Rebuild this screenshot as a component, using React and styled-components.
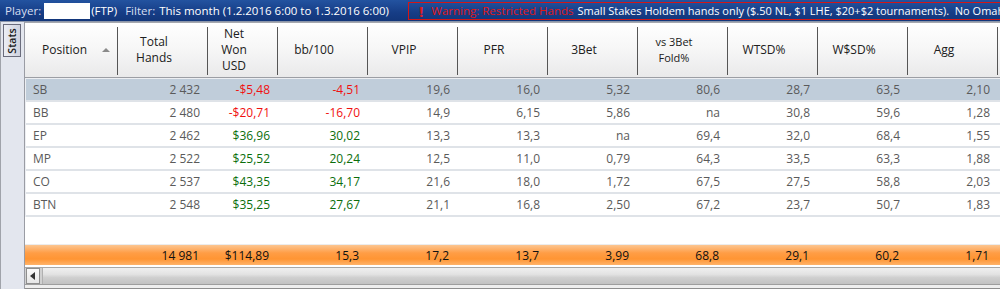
import styled, { createGlobalStyle } from 'styled-components';

const GlobalStyle = createGlobalStyle`
html, body {
    margin: 0;
    padding: 0;
    background: #ffffff;
    overflow: hidden;
}
body {
    font-family: "Open Sans", "Noto Sans", sans-serif;
}
`

const columns = [
    { key: 'pos', label: ['Position'], width: 92, left: true },
    { key: 'hands', label: ['Total', 'Hands'], width: 90 },
    { key: 'won', label: ['Net', 'Won', 'USD'], width: 70 },
    { key: 'bb', label: ['bb/100'], width: 90 },
    { key: 'vpip', label: ['VPIP'], width: 90 },
    { key: 'pfr', label: ['PFR'], width: 90 },
    { key: 'threeBet', label: ['3Bet'], width: 90 },
    { key: 'fold', label: ['vs 3Bet', 'Fold%'], width: 90, small: true },
    { key: 'wtsd', label: ['WTSD%'], width: 90 },
    { key: 'wssd', label: ['W$SD%'], width: 90 },
    { key: 'agg', label: ['Agg'], width: 90 },
];

const rows = [
    ['SB', '2 432', '-$5,48', '-4,51', '19,6', '16,0', '5,32', '80,6', '28,7', '63,5', '2,10'],
    ['BB', '2 480', '-$20,71', '-16,70', '14,9', '6,15', '5,86', 'na', '30,8', '59,6', '1,28'],
    ['EP', '2 462', '$36,96', '30,02', '13,3', '13,3', 'na', '69,4', '32,0', '68,4', '1,55'],
    ['MP', '2 522', '$25,52', '20,24', '12,5', '11,0', '0,79', '64,3', '33,5', '63,3', '1,88'],
    ['CO', '2 537', '$43,35', '34,17', '21,6', '18,0', '1,72', '67,5', '27,5', '58,8', '2,03'],
    ['BTN', '2 548', '$35,25', '27,67', '21,1', '16,8', '2,50', '67,2', '23,7', '50,7', '1,83'],
];

const totals = ['', '14 981', '$114,89', '15,3', '17,2', '13,7', '3,99', '68,8', '29,1', '60,2', '1,71'];

function toneOf(value, index) {
    if (index !== 2 && index !== 3) return 'plain';
    return value.startsWith('-') ? 'loss' : 'win';
}

function App() {
    return (
        <>
            <GlobalStyle />
            <Page>
                <TopBar>
                    <FilterGroup>
                        <Dim>Player:</Dim>
                        <PlayerBox />
                        <span>(FTP)</span>
                        <Dim style={{ marginLeft: 8 }}>Filter:</Dim>
                        <Strong>This month (1.2.2016 6:00 to 1.3.2016 6:00)</Strong>
                    </FilterGroup>
                    <Warning>
                        <Bang>!</Bang>
                        <WarnLabel>Warning: Restricted Hands</WarnLabel>
                        <Strong>Small Stakes Holdem hands only ($.50 NL, $1 LHE, $20+$2 tournaments).&nbsp; No Omaha hands</Strong>
                    </Warning>
                </TopBar>

                <Body>
                    <SideStrip>
                        <StatsTab><span>Stats</span></StatsTab>
                    </SideStrip>

                    <Grid>
                        <HeaderRow>
                            {columns.map(col => (
                                <HeaderCell key={col.key} $width={col.width} $left={col.left} $small={col.small}>
                                    <div>
                                        {col.label.map(line => <div key={line}>{line}</div>)}
                                    </div>
                                    {col.left && <SortArrow />}
                                </HeaderCell>
                            ))}
                        </HeaderRow>

                        <Rows>
                            {rows.map((row, i) => (
                                <Row key={row[0]} $selected={i === 0}>
                                    {row.map((value, j) => (
                                        <Cell key={j} $width={columns[j].width} $left={j === 0} $tone={toneOf(value, j)}>
                                            {value}
                                        </Cell>
                                    ))}
                                </Row>
                            ))}
                        </Rows>

                        <Filler />

                        <TotalsRow>
                            {totals.map((value, j) => (
                                <TotalCell key={j} $width={columns[j].width}>{value}</TotalCell>
                            ))}
                        </TotalsRow>

                        <ScrollBar>
                            <ScrollButton>
                                <svg width="6" height="8" viewBox="0 0 6 8">
                                    <path d="M5 0 L5 8 L0 4 Z" fill="#333" />
                                </svg>
                            </ScrollButton>
                            <ScrollTrack />
                        </ScrollBar>
                        <BottomEdge />
                    </Grid>
                </Body>
            </Page>
        </>
    )
}

const Page = styled.div`
width: 1000px;
height: 289px;
display: flex;
flex-direction: column;
overflow: hidden;
`
const TopBar = styled.div`
height: 21px;
flex-shrink: 0;
display: flex;
align-items: center;
background: linear-gradient(#2353a0, #163d86 60%, #12367a);
color: #ffffff;
font-size: 11px;
white-space: nowrap;
overflow: hidden;
border-bottom: 1px solid #8c96aa;
`
const FilterGroup = styled.div`
width: 408px;
flex-shrink: 0;
display: flex;
align-items: center;
padding-left: 5px;
box-sizing: border-box;
font-size: 11.5px;
`
const Dim = styled.span`
color: #d6def0;
`
const Strong = styled.span`
color: #ffffff;
margin-left: 4px;
`
const PlayerBox = styled.span`
display: inline-block;
width: 46px;
height: 16px;
background: #ffffff;
margin: 0 1px 0 3px;
`
const Warning = styled.div`
flex-shrink: 0;
height: 16px;
display: flex;
align-items: center;
border: 1px solid #d41616;
padding-left: 10px;
`
const Bang = styled.span`
color: #e41c1c;
font-weight: 700;
font-size: 15px;
margin-right: 8px;
`
const WarnLabel = styled.span`
color: #e01818;
font-size: 11.5px;
`
const Body = styled.div`
flex: 1;
min-height: 0;
display: flex;
background: #e3e6ee;
border-left: 1px solid #a0a3aa;
`
const SideStrip = styled.div`
width: 23px;
flex-shrink: 0;
padding-top: 2px;
padding-left: 2px;
box-sizing: border-box;
`
const StatsTab = styled.div`
width: 18px;
height: 33px;
box-sizing: border-box;
border: 1px solid #6a6c7c;
background: linear-gradient(90deg, #eceef4, #cfd2de);
display: flex;
align-items: center;
justify-content: center;
span {
    transform: rotate(-90deg);
    font-size: 10.5px;
    font-weight: 600;
    color: #202020;
}
`
const Grid = styled.div`
flex: 1;
display: flex;
flex-direction: column;
border-left: 1px solid #9a9ca4;
background: #ffffff;
min-width: 0;
`
const HeaderRow = styled.div`
height: 54px;
flex-shrink: 0;
display: flex;
border-top: 1px solid #a6a8ae;
border-bottom: 1px solid #9c9ea4;
background: linear-gradient(#ffffff, #f6f6f6 50%, #e9e9ea);
padding-left: 1px;
color: #202020;
font-size: 12px;
`
const HeaderCell = styled.div`
width: ${p => p.$width}px;
flex-shrink: 0;
box-sizing: border-box;
display: flex;
align-items: center;
justify-content: ${p => p.$left ? 'flex-start' : 'center'};
text-align: center;
padding: ${p => p.$left ? '0 0 0 16px' : '0 18px 0 0'};
line-height: 16px;
font-size: ${p => p.$small ? '11px' : '12px'};
position: relative;
&::after {
    content: "";
    position: absolute;
    right: 0;
    top: 4px;
    bottom: 2px;
    width: 1px;
    background: #555555;
}
`
const SortArrow = styled.span`
margin-left: 15px;
width: 0;
height: 0;
border-left: 4px solid transparent;
border-right: 4px solid transparent;
border-bottom: 4px solid #8a8a8a;
`
const Rows = styled.div`
display: flex;
flex-direction: column;
flex-shrink: 0;
padding-top: 1px;
background: #eceef2;
`
const Row = styled.div`
height: 21px;
display: flex;
align-items: center;
margin-left: 1px;
background: ${p => p.$selected ? '#c0cdda' : '#ffffff'};
border-bottom: 2px solid #dfe3e8;
font-size: 12px;
`
const toneColours = {
    plain: '#5a5a5a',
    loss: '#f01010',
    win: '#0b6e0b',
};
const Cell = styled.div`
width: ${p => p.$width}px;
flex-shrink: 0;
box-sizing: border-box;
text-align: ${p => p.$left ? 'left' : 'right'};
padding: ${p => p.$left ? '0 0 0 7px' : '0 8px 0 0'};
color: ${p => toneColours[p.$tone]};
white-space: nowrap;
`
const Filler = styled.div`
flex: 1;
background: #ffffff;
border-bottom: 1px solid #ececec;
`
const TotalsRow = styled.div`
height: 20px;
flex-shrink: 0;
display: flex;
align-items: center;
background: linear-gradient(#fcc590, #ff9d45 40%, #ff9533 70%, #ffb36a);
color: #111111;
font-size: 12px;
`
const TotalCell = styled.div`
width: ${p => p.$width}px;
flex-shrink: 0;
box-sizing: border-box;
text-align: right;
padding-right: 8px;
white-space: nowrap;
`
const ScrollBar = styled.div`
height: 16px;
flex-shrink: 0;
margin-top: 2px;
display: flex;
border-top: 1px solid #a8a8a8;
border-bottom: 1px solid #9e9e9e;
background: #d0d0d0;
`
const ScrollButton = styled.div`
width: 14px;
display: flex;
align-items: center;
justify-content: center;
background: linear-gradient(#fafafa, #e6e6e6);
border: 1px solid #8e8e8e;
box-sizing: border-box;
margin-left: 1px;
`
const ScrollTrack = styled.div`
flex: 1;
margin-left: 2px;
background: linear-gradient(#f0f0f0, #e2e2e2 40%, #cfcfcf 60%, #c2c2c2);
border-left: 1px solid #b0b0b0;
`
const BottomEdge = styled.div`
height: 3px;
flex-shrink: 0;
background: #eeeeee;
border-bottom: 1px solid #8e8e8e;
`

export default App;
